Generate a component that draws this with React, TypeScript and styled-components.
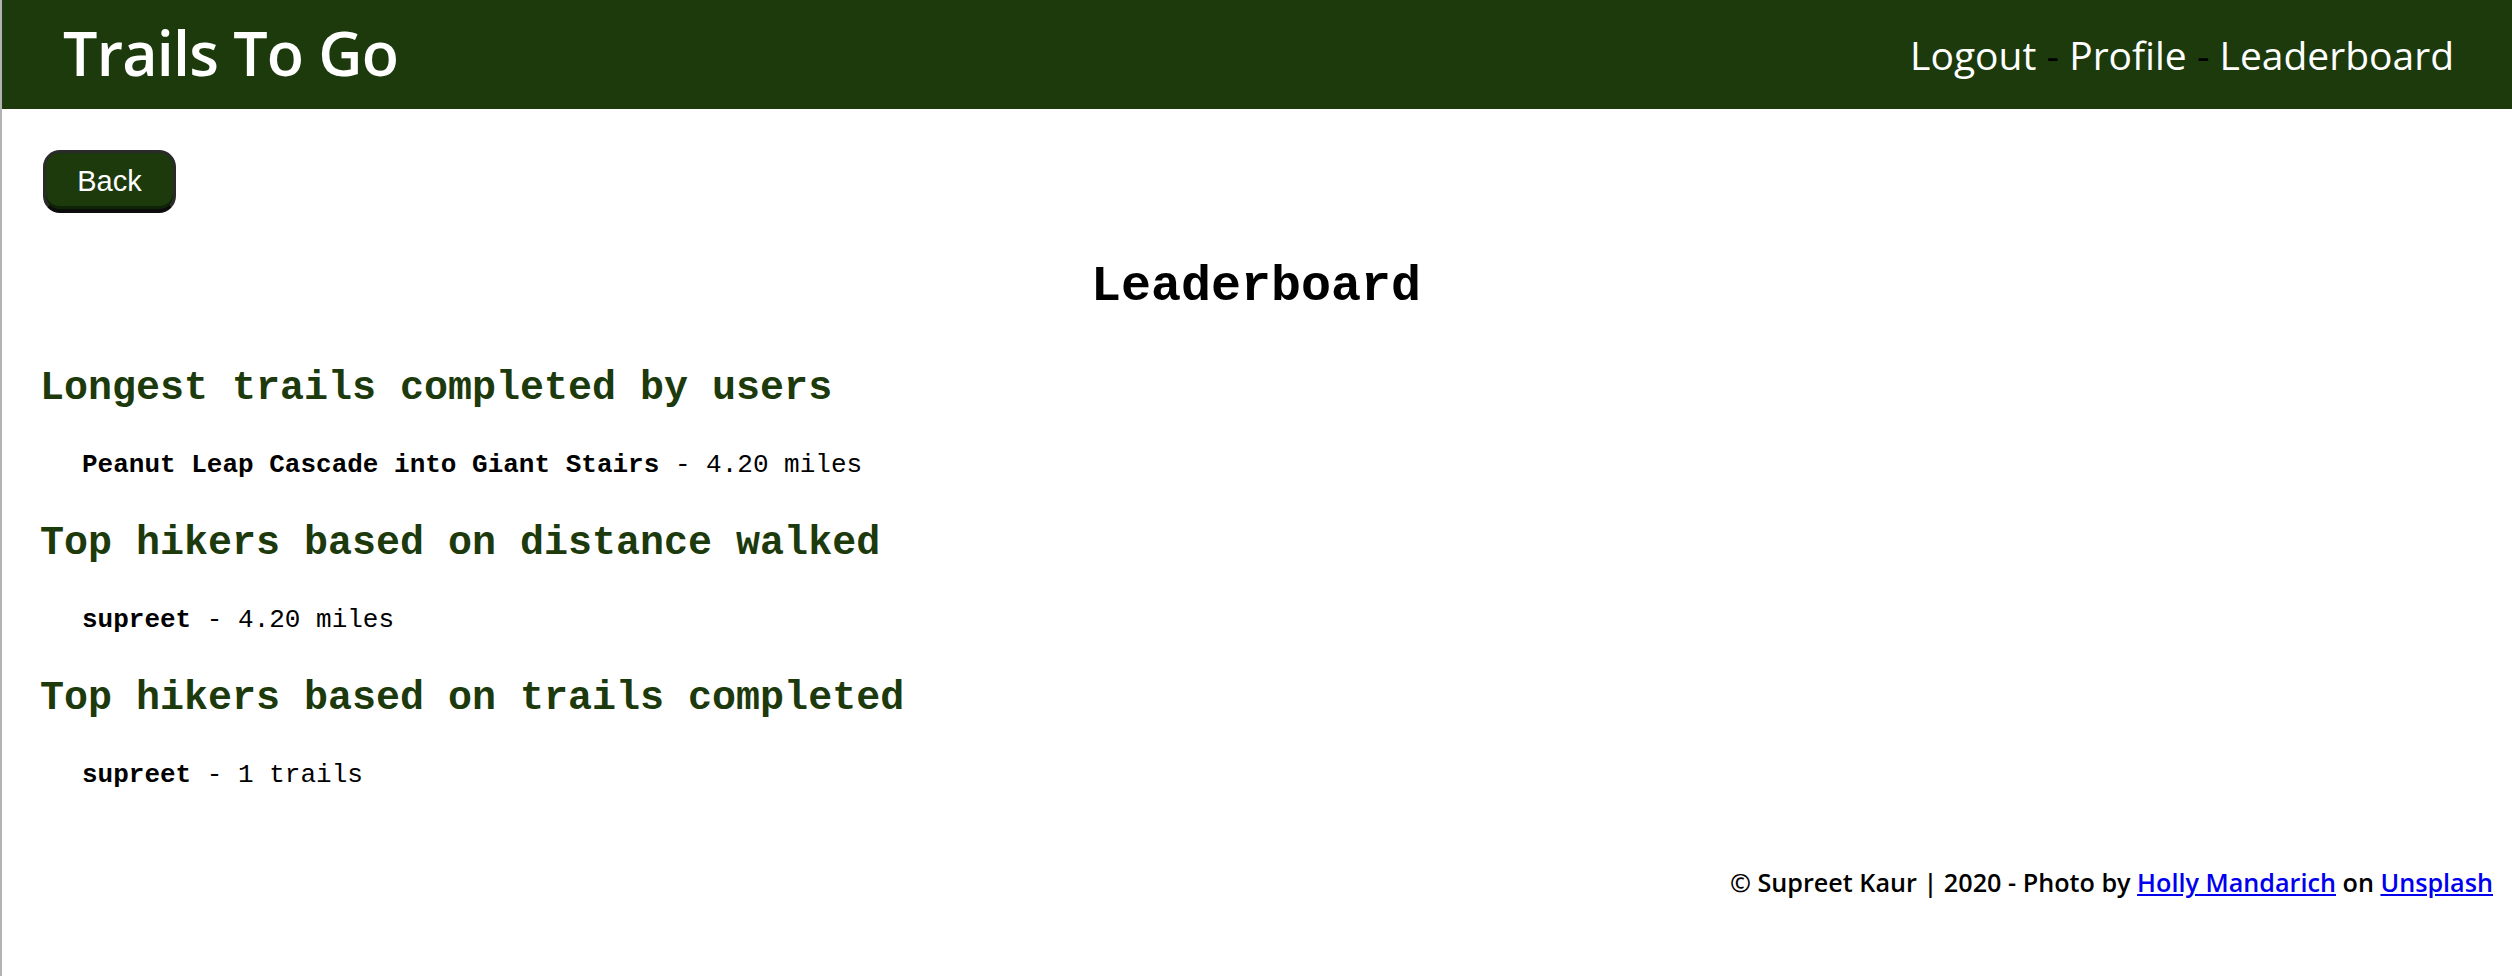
import React from "react";
import styled, { createGlobalStyle } from "styled-components";

const GlobalStyle = createGlobalStyle`
  html, body {
    margin: 0;
    padding: 0;
    background: #ffffff;
  }
  body {
    font-family: "Open Sans", "Noto Sans", sans-serif;
  }
`;

const GREEN = "#1c3a0c";

const Page = styled.div`
  min-height: 100vh;
  border-left: 2px solid #b3b3b3;
  box-sizing: border-box;
  display: flex;
  flex-direction: column;
`;

const Header = styled.header`
  height: 109px;
  background: ${GREEN};
  display: flex;
  align-items: center;
  justify-content: space-between;
  padding: 0 58px 0 61px;
  box-sizing: border-box;
`;

const Brand = styled.h1`
  margin: -4px 0 0 0;
  font-family: "Open Sans", "Noto Sans", sans-serif;
  font-weight: 600;
  font-size: 61px;
  color: #ffffff;
  letter-spacing: -0.8px;
`;

const Nav = styled.nav`
  display: flex;
  align-items: center;
  gap: 0.26em;
  font-family: "Open Sans", "Noto Sans", sans-serif;
  font-size: 39px;
  font-weight: 400;
  color: #ffffff;
`;

const NavLink = styled.a`
  color: #ffffff;
  text-decoration: none;
`;

const Sep = styled.span`
  color: #000000;
`;

const Main = styled.main`
  padding: 0 40px 0 38px;
  display: flex;
  flex-direction: column;
`;

const BackButton = styled.button`
  align-self: flex-start;
  margin: 41px 0 0 3px;
  width: 133px;
  height: 63px;
  box-sizing: border-box;
  background: ${GREEN};
  color: #ffffff;
  font-family: "Liberation Sans", Arial, sans-serif;
  font-size: 29px;
  border: 3px solid #2a2a2a;
  border-bottom: 4px solid #0c0c0c;
  border-radius: 17px;
  box-shadow: inset 0 -3px 0 #0f2407;
  padding: 0;
  cursor: pointer;
`;

const Title = styled.h2`
  margin: 44px 0 0 0;
  text-align: center;
  font-family: "Liberation Mono", "Courier New", monospace;
  font-weight: 700;
  font-size: 50px;
  line-height: 60px;
  color: #000000;
`;

const Section = styled.section`
  display: flex;
  flex-direction: column;
  margin-top: ${(p: { $first?: boolean }) => (p.$first ? "48px" : "39px")};
`;

const SectionTitle = styled.h3`
  margin: 0;
  font-family: "Liberation Mono", "Courier New", monospace;
  font-weight: 700;
  font-size: 40px;
  line-height: 48px;
  color: ${GREEN};
`;

const List = styled.ul`
  list-style: none;
  margin: 36px 0 0 0;
  padding: 0 0 0 42px;
`;

const Item = styled.li`
  font-family: "Liberation Mono", "Courier New", monospace;
  font-size: 26px;
  line-height: 32px;
  color: #000000;
`;

const Name = styled.strong`
  font-weight: 700;
`;

const Footer = styled.footer`
  margin-top: 75px;
  padding: 0 19px 0 0;
  text-align: right;
  font-family: "Open Sans", "Noto Sans", sans-serif;
  font-weight: 600;
  font-size: 25.2px;
  line-height: 32px;
  color: #000000;
`;

const FootLink = styled.a`
  color: #0000ee;
  text-decoration: underline;
`;

type Entry = { name: string; value: string };
type Board = { title: string; entries: Entry[] };

const boards: Board[] = [
  {
    title: "Longest trails completed by users",
    entries: [{ name: "Peanut Leap Cascade into Giant Stairs", value: "4.20 miles" }],
  },
  {
    title: "Top hikers based on distance walked",
    entries: [{ name: "supreet", value: "4.20 miles" }],
  },
  {
    title: "Top hikers based on trails completed",
    entries: [{ name: "supreet", value: "1 trails" }],
  },
];

export default function App() {
  return (
    <>
      <GlobalStyle />
      <Page>
        <Header>
          <Brand>Trails To Go</Brand>
          <Nav>
            <NavLink href="#">Logout</NavLink>
            <Sep>-</Sep>
            <NavLink href="#">Profile</NavLink>
            <Sep>-</Sep>
            <NavLink href="#">Leaderboard</NavLink>
          </Nav>
        </Header>
        <Main>
          <BackButton type="button">Back</BackButton>
          <Title>Leaderboard</Title>
          {boards.map((b, i) => (
            <Section key={b.title} $first={i === 0}>
              <SectionTitle>{b.title}</SectionTitle>
              <List>
                {b.entries.map((e) => (
                  <Item key={e.name}>
                    <Name>{e.name}</Name> - {e.value}
                  </Item>
                ))}
              </List>
            </Section>
          ))}
        </Main>
        <Footer>
          © Supreet Kaur | 2020 - Photo by <FootLink href="#">Holly Mandarich</FootLink> on{" "}
          <FootLink href="#">Unsplash</FootLink>
        </Footer>
      </Page>
    </>
  );
}
